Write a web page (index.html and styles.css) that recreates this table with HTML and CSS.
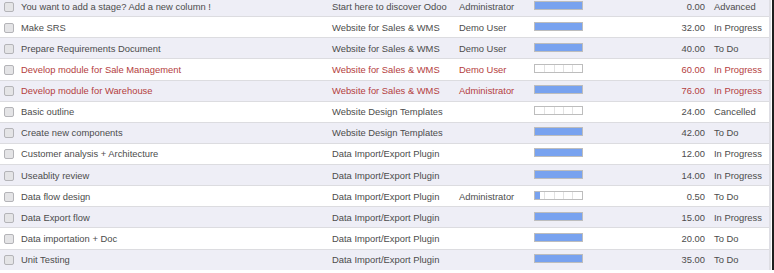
FILE: index.html
```html
<!DOCTYPE html>
<html lang="en">
  <head>
    <meta charset="UTF-8" />
    <title>Tasks</title>
    <link rel="stylesheet" href="styles.css">
  </head>
  <body>
    <div class="list-view">
      <table class="task-table">
        <colgroup>
          <col class="c-check" />
          <col class="c-name" />
          <col class="c-project" />
          <col class="c-user" />
          <col class="c-progress" />
          <col class="c-hours" />
          <col class="c-stage" />
        </colgroup>
        <tbody>
          <tr>
            <td class="check"><span class="box"></span></td>
            <td>You want to add a stage? Add a new column !</td>
            <td>Start here to discover Odoo</td>
            <td>Administrator</td>
            <td><div class="bar"><div class="fill" style="width: 100%"></div></div></td>
            <td class="num">0.00</td>
            <td>Advanced</td>
          </tr>
          <tr>
            <td class="check"><span class="box"></span></td>
            <td>Make SRS</td>
            <td>Website for Sales &amp; WMS</td>
            <td>Demo User</td>
            <td><div class="bar"><div class="fill" style="width: 100%"></div></div></td>
            <td class="num">32.00</td>
            <td>In Progress</td>
          </tr>
          <tr>
            <td class="check"><span class="box"></span></td>
            <td>Prepare Requirements Document</td>
            <td>Website for Sales &amp; WMS</td>
            <td>Demo User</td>
            <td><div class="bar"><div class="fill" style="width: 100%"></div></div></td>
            <td class="num">40.00</td>
            <td>To Do</td>
          </tr>
          <tr class="late">
            <td class="check"><span class="box"></span></td>
            <td>Develop module for Sale Management</td>
            <td>Website for Sales &amp; WMS</td>
            <td>Demo User</td>
            <td><div class="bar"><div class="fill" style="width: 0%"></div></div></td>
            <td class="num">60.00</td>
            <td>In Progress</td>
          </tr>
          <tr class="late">
            <td class="check"><span class="box"></span></td>
            <td>Develop module for Warehouse</td>
            <td>Website for Sales &amp; WMS</td>
            <td>Administrator</td>
            <td><div class="bar"><div class="fill" style="width: 100%"></div></div></td>
            <td class="num">76.00</td>
            <td>In Progress</td>
          </tr>
          <tr>
            <td class="check"><span class="box"></span></td>
            <td>Basic outline</td>
            <td>Website Design Templates</td>
            <td></td>
            <td><div class="bar"><div class="fill" style="width: 0%"></div></div></td>
            <td class="num">24.00</td>
            <td>Cancelled</td>
          </tr>
          <tr>
            <td class="check"><span class="box"></span></td>
            <td>Create new components</td>
            <td>Website Design Templates</td>
            <td></td>
            <td><div class="bar"><div class="fill" style="width: 100%"></div></div></td>
            <td class="num">42.00</td>
            <td>To Do</td>
          </tr>
          <tr>
            <td class="check"><span class="box"></span></td>
            <td>Customer analysis + Architecture</td>
            <td>Data Import/Export Plugin</td>
            <td></td>
            <td><div class="bar"><div class="fill" style="width: 100%"></div></div></td>
            <td class="num">12.00</td>
            <td>In Progress</td>
          </tr>
          <tr>
            <td class="check"><span class="box"></span></td>
            <td>Useablity review</td>
            <td>Data Import/Export Plugin</td>
            <td></td>
            <td><div class="bar"><div class="fill" style="width: 100%"></div></div></td>
            <td class="num">14.00</td>
            <td>In Progress</td>
          </tr>
          <tr>
            <td class="check"><span class="box"></span></td>
            <td>Data flow design</td>
            <td>Data Import/Export Plugin</td>
            <td>Administrator</td>
            <td><div class="bar"><div class="fill" style="width: 10%"></div></div></td>
            <td class="num">0.50</td>
            <td>To Do</td>
          </tr>
          <tr>
            <td class="check"><span class="box"></span></td>
            <td>Data Export flow</td>
            <td>Data Import/Export Plugin</td>
            <td></td>
            <td><div class="bar"><div class="fill" style="width: 100%"></div></div></td>
            <td class="num">15.00</td>
            <td>In Progress</td>
          </tr>
          <tr>
            <td class="check"><span class="box"></span></td>
            <td>Data importation + Doc</td>
            <td>Data Import/Export Plugin</td>
            <td></td>
            <td><div class="bar"><div class="fill" style="width: 100%"></div></div></td>
            <td class="num">20.00</td>
            <td>To Do</td>
          </tr>
          <tr>
            <td class="check"><span class="box"></span></td>
            <td>Unit Testing</td>
            <td>Data Import/Export Plugin</td>
            <td></td>
            <td><div class="bar"><div class="fill" style="width: 100%"></div></div></td>
            <td class="num">35.00</td>
            <td>To Do</td>
          </tr>
        </tbody>
      </table>
    </div>
  </body>
</html>
```

FILE: styles.css
```css
body {
  margin: 0;
  padding: 0;
  background-color: #fff;
  font-family: "Liberation Sans", Arial, sans-serif;
  font-size: 9.4px;
  color: #4c4c4c;
  overflow: hidden;
}
.list-view {
  width: 772px;
  height: 270px;
  border-right: 2px solid #1e1e1e;
  overflow: hidden;
}
.task-table {
  width: 770px;
  margin-top: -5px;
  border-collapse: collapse;
  table-layout: fixed;
  border-right: 2px solid #dedee4;
}
.c-check { width: 17px; }
.c-name { width: 311px; }
.c-project { width: 127px; }
.c-user { width: 75px; }
.c-progress { width: 60px; }
.c-hours { width: 120px; }
.c-stage { width: 60px; }

.task-table tr {
  height: 21.125px;
  border-top: 1px solid #dcdce0;
}
.task-table tr:nth-child(odd) {
  background-color: #eeeef6;
}
.task-table td {
  padding: 0 0 0 4px;
  white-space: nowrap;
  overflow: hidden;
  vertical-align: middle;
}
.task-table td.num {
  text-align: right;
  padding: 0 5px 0 0;
}
.task-table tr.late {
  color: #b4403e;
}
td.check {
  padding-left: 4px;
}
.box {
  display: block;
  width: 8px;
  height: 8px;
  border: 1px solid #b4b4b8;
  border-radius: 2px;
  background-color: #e4e4e6;
  margin-top: 1px;
}
.bar {
  width: 47px;
  height: 7px;
  border: 1px solid #bdbdbd;
  background-color: #fff;
  background-image: linear-gradient(90deg, transparent 0, transparent 9px, #e2e2e2 9px, #e2e2e2 10px, transparent 10px, transparent 19px, #e2e2e2 19px, #e2e2e2 20px, transparent 20px, transparent 28px, #e2e2e2 28px, #e2e2e2 29px, transparent 29px, transparent 37px, #e2e2e2 37px, #e2e2e2 38px, transparent 38px);
  margin-top: -2px;
}
.fill {
  height: 100%;
  background-color: #78a2ef;
}
```
